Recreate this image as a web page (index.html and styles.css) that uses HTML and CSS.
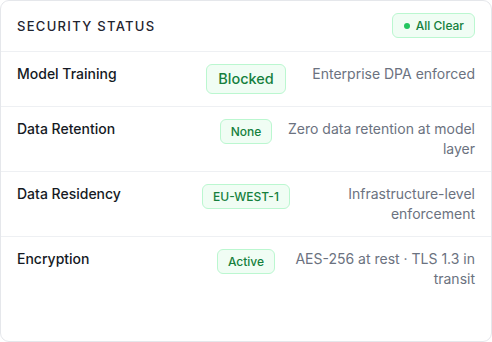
FILE: index.html
```html
<!DOCTYPE html>
<html>
<head>
<meta charset="utf-8">
<link rel="stylesheet" href="styles.css">
</head>
<body>
<div class="card">
  <div class="header">
    <span class="title">Security Status</span>
    <span class="pill pill-status"><span class="dot"></span>All Clear</span>
  </div>
  <div class="row">
    <span class="label">Model Training</span>
    <span class="pill pill-lg">Blocked</span>
    <span class="desc">Enterprise DPA enforced</span>
  </div>
  <div class="row">
    <span class="label">Data Retention</span>
    <span class="pill">None</span>
    <span class="desc">Zero data retention at model layer</span>
  </div>
  <div class="row">
    <span class="label">Data Residency</span>
    <span class="pill">EU-WEST-1</span>
    <span class="desc">Infrastructure-level enforcement</span>
  </div>
  <div class="row last">
    <span class="label">Encryption</span>
    <span class="pill">Active</span>
    <span class="desc">AES-256 at rest · TLS 1.3 in transit</span>
  </div>
</div>
</body>
</html>
```
FILE: styles.css
```css
* { box-sizing: border-box; }
html, body { margin: 0; padding: 0; background: #ffffff; }
body {
  font-family: Inter, "Noto Sans", sans-serif;
  width: 492px;
  height: 342px;
}
.card {
  width: 492px;
  height: 342px;
  border: 1px solid #e5e7eb;
  border-radius: 9px;
  background: #ffffff;
  overflow: hidden;
}
.header {
  display: flex;
  align-items: center;
  justify-content: space-between;
  padding: 12px 16px 13px;
  border-bottom: 1px solid #eef0f3;
}
.title {
  font-size: 13px;
  font-weight: 450;
  letter-spacing: 0.1em;
  text-transform: uppercase;
  color: #1f2430;
}
.pill {
  display: inline-flex;
  align-items: center;
  background: #f0fdf4;
  border: 1px solid #bbf7d0;
  border-radius: 6px;
  color: #15803d;
  font-size: 12px;
  font-weight: 450;
  line-height: 15px;
  padding: 4px 10px;
  justify-self: center;
  white-space: nowrap;
}
.pill-status {
  padding: 4px 10px 4px 11px;
}
.pill-lg {
  font-size: 14.5px;
  line-height: 20px;
  padding: 4px 11px;
}
.dot {
  width: 6px;
  height: 6px;
  border-radius: 50%;
  background: #22c55e;
  margin-right: 6px;
}
.row {
  display: grid;
  grid-template-columns: 1fr auto 1fr;
  column-gap: 12px;
  align-items: start;
  padding: 12px 16px;
  border-bottom: 1px solid #eef0f3;
}
.row.last { border-bottom: none; }
.label {
  font-size: 14px;
  font-weight: 450;
  line-height: 20px;
  color: #151a24;
}
.desc {
  font-size: 14px;
  line-height: 20px;
  color: #6b7280;
  text-align: right;
}
```
